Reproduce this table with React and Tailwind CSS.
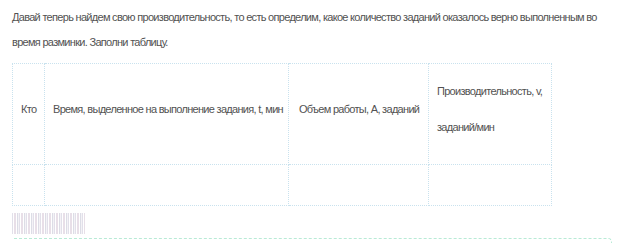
import React from "react";

const font = { fontFamily: '"Liberation Sans", Arial, sans-serif' };

export default function App() {
  const cell = "border border-dotted border-[#c9e2ee] pl-[8px] pr-[2px] align-middle whitespace-nowrap overflow-hidden";
  return (
    <div className="w-[623px] h-[243px] bg-white overflow-hidden text-[#525252] tracking-[-0.7px]" style={font}>
      <div className="pl-[12px] pt-[5px] text-[11px] leading-[25px] whitespace-nowrap">
        Давай теперь найдем свою производительность, то есть определим, какое количество заданий оказалось верно выполненным во
        <br />
        время разминки. Заполни таблицу.
      </div>
      <div className="pl-[12px] pt-[8px]">
        <table className="border-collapse table-fixed w-[539px] text-[11px] leading-[15px]">
          <colgroup>
            <col className="w-[32px]" />
            <col className="w-[244px]" />
            <col className="w-[140px]" />
            <col className="w-[123px]" />
          </colgroup>
          <tbody>
            <tr className="h-[101px]">
              <td className={`${cell} pb-[10px]`}>Кто</td>
              <td className={`${cell} pb-[10px]`}>Время, выделенное на выполнение задания, t, мин</td>
              <td className={`${cell} pb-[10px] pl-[10px]`}>Объем работы, A, заданий</td>
              <td className={`${cell} pb-[10px]`}>
                <div>Производительность, v,</div>
                <div className="mt-[21px]">заданий/мин</div>
              </td>
            </tr>
            <tr className="h-[41px]">
              <td className={cell}></td>
              <td className={cell}></td>
              <td className={cell}></td>
              <td className={cell}></td>
            </tr>
          </tbody>
        </table>
      </div>
      <div className="pl-[12px] pt-[7px]">
        <div className="w-[73px] h-[21px] bg-[repeating-linear-gradient(90deg,#e2e0ea_0px,#e2e0ea_1px,#ffffff_1px,#ffffff_2px,#e8dfe8_2px,#e8dfe8_4px,#ffffff_4px,#ffffff_5px,#dcdde6_5px,#dcdde6_6px,#f4f2f6_6px,#f4f2f6_7px)]"></div>
      </div>
      <div className="pl-[14px] pt-[4px]">
        <div className="w-[598px] h-[10px] border-t border-r border-dashed border-[#b8ebd6] rounded-tr-[4px]"></div>
      </div>
    </div>
  );
}
